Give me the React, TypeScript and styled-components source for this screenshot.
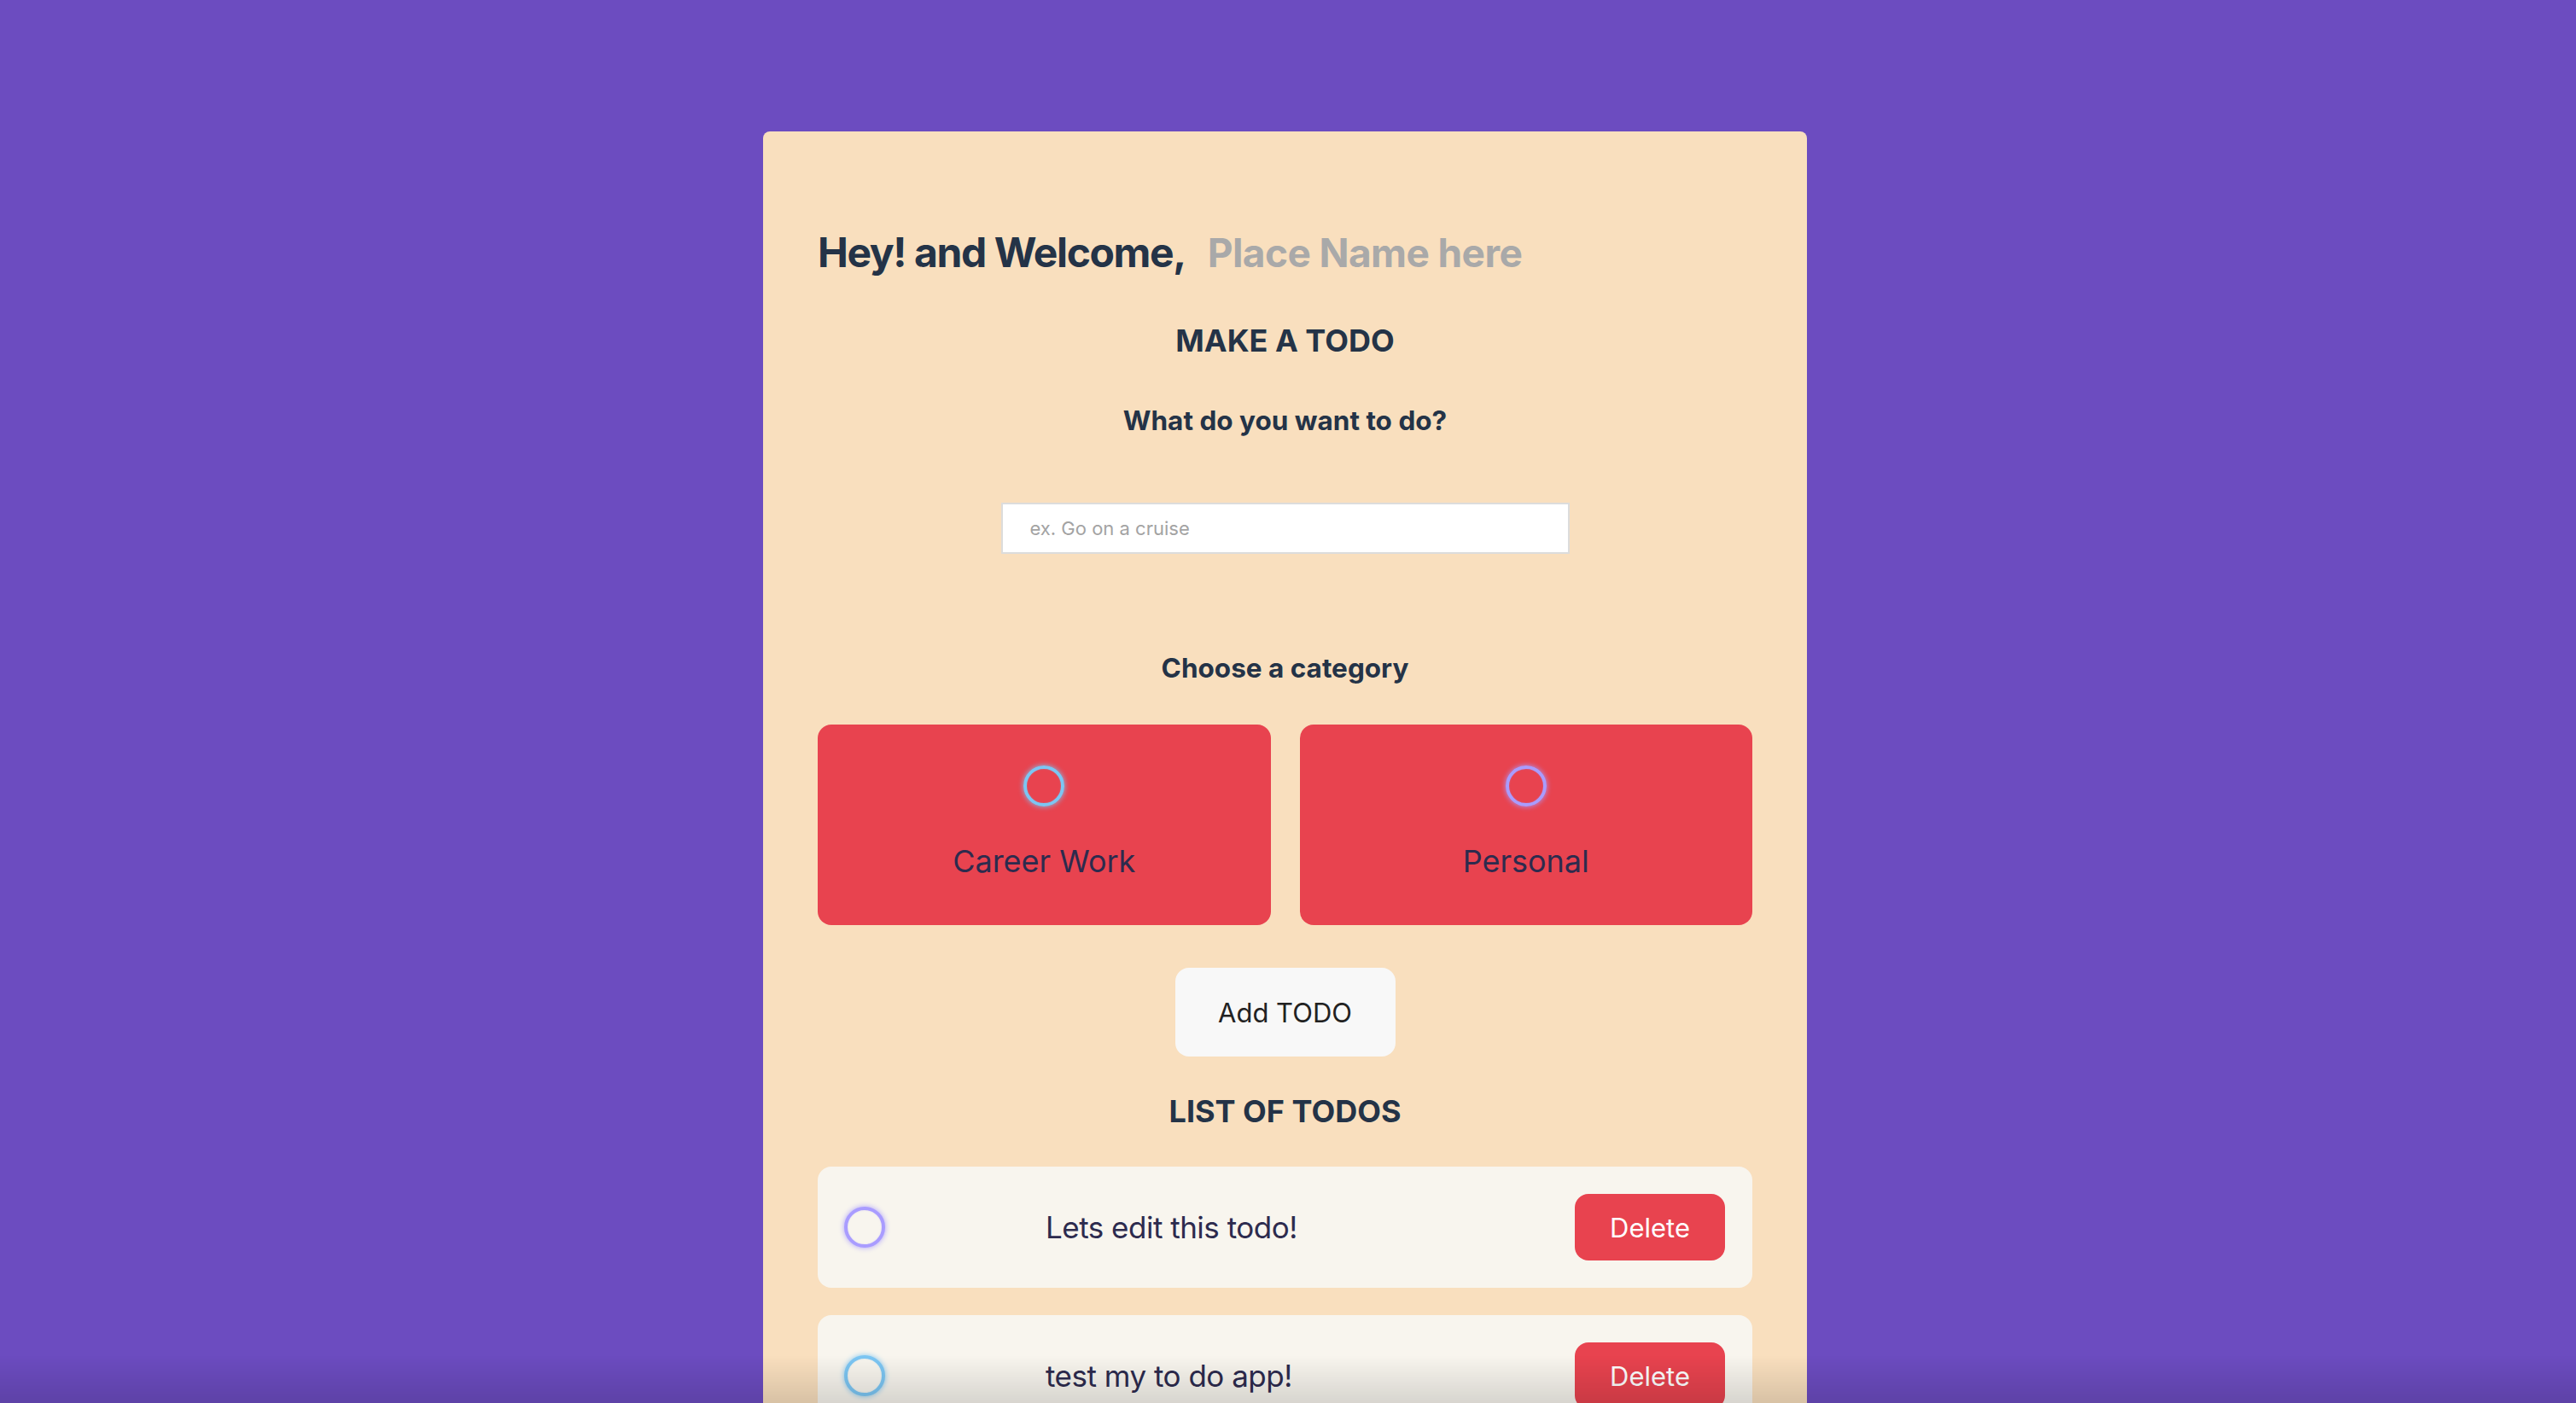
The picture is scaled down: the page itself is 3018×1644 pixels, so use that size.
import React from "react";
import styled, { createGlobalStyle } from "styled-components";

const GlobalStyle = createGlobalStyle`
  * { box-sizing: border-box; }
  html, body {
    margin: 0;
    padding: 0;
    background: #6c4cc0;
    font-family: Inter, "Noto Sans", sans-serif;
  }
  body { min-height: 100vh; }
`;

const Page = styled.main`
  min-height: 100vh;
  padding: 154px 7px 0 0;
  display: flex;
  justify-content: center;
`;

const Card = styled.section`
  width: 1223px;
  background: #f9dfbe;
  border-radius: 8px;
  padding: 112px 64px 64px;
  display: flex;
  flex-direction: column;
  color: #243347;
`;

const Greeting = styled.div`
  display: flex;
  align-items: baseline;
  gap: 26px;
  font-size: 48px;
  font-weight: 700;
  line-height: normal;
`;

const GreetingText = styled.span`
  flex: none;
  white-space: nowrap;
  letter-spacing: -1.4px;
`;

const NameInput = styled.input`
  flex: 1;
  min-width: 0;
  border: none;
  background: transparent;
  outline: none;
  padding: 0;
  font-family: inherit;
  font-size: 46px;
  font-weight: 700;
  letter-spacing: -0.6px;
  color: #243347;
  &::placeholder { color: #a9a9a9; }
`;

const SectionTitle = styled.h3<{ $top: number }>`
  margin: ${(p) => p.$top}px 0 0;
  text-align: center;
  font-size: 36px;
  font-weight: 700;
  line-height: normal;
`;

const Prompt = styled.h4<{ $top: number }>`
  margin: ${(p) => p.$top}px 0 0;
  text-align: center;
  font-size: 31.5px;
  font-weight: 700;
  line-height: normal;
`;

const TodoInput = styled.input`
  align-self: center;
  margin-top: 77px;
  width: 666px;
  height: 60px;
  border: 2px solid #dcdcdc;
  background: #fff;
  padding: 0 32px;
  font-family: inherit;
  font-size: 22px;
  color: #333;
  outline: none;
  &::placeholder { color: #a3a3a3; }
`;

const Categories = styled.div`
  margin-top: 47px;
  display: grid;
  grid-template-columns: 1fr 1fr;
  gap: 34px;
`;

const CategoryBox = styled.label`
  height: 235px;
  background: #e8434f;
  border-radius: 16px;
  display: flex;
  flex-direction: column;
  align-items: center;
  padding-top: 48px;
  gap: 42px;
  cursor: pointer;
`;

const Bubble = styled.span<{ $color: string; $fill?: string }>`
  width: 48px;
  height: 48px;
  flex: none;
  border-radius: 50%;
  border: 4px solid ${(p) => p.$color};
  background: ${(p) => p.$fill ?? "transparent"};
  box-shadow: 0 0 6px ${(p) => p.$color}, inset 0 0 2px ${(p) => p.$color}55;
`;

const CategoryLabel = styled.span`
  font-size: 36px;
  font-weight: 400;
  line-height: normal;
  color: #2d2b4e;
`;

const AddButton = styled.button`
  align-self: center;
  margin-top: 50px;
  width: 258px;
  height: 104px;
  border: none;
  border-radius: 16px;
  background: #f8f8f8;
  font-family: inherit;
  font-size: 31px;
  color: #222;
  cursor: pointer;
`;

const TodoList = styled.ul`
  list-style: none;
  margin: 43px 0 0;
  padding: 0;
  display: flex;
  flex-direction: column;
  gap: 32px;
`;

const TodoItem = styled.li`
  height: 142px;
  background: #f8f5ee;
  border-radius: 16px;
  display: flex;
  align-items: center;
  padding: 0 32px 0 31px;
`;

const TodoText = styled.span`
  flex: 1;
  margin-left: 188px;
  font-size: 35px;
  letter-spacing: -0.5px;
  font-weight: 400;
  line-height: normal;
  color: #2d2b4e;
`;

const DeleteButton = styled.button`
  width: 176px;
  height: 78px;
  border: none;
  border-radius: 16px;
  background: #e8434f;
  color: #fff;
  font-family: inherit;
  font-size: 31px;
  cursor: pointer;
`;

const BottomFade = styled.div`
  position: fixed;
  left: 0;
  right: 0;
  bottom: 0;
  height: 56px;
  pointer-events: none;
  background: linear-gradient(to bottom, rgba(0, 0, 0, 0), rgba(0, 0, 0, 0.13));
`;

const todos = [
  { text: "Lets edit this todo!", color: "#a99cff" },
  { text: "test my to do app!", color: "#7cc6f3" },
];

export default function App() {
  return (
    <>
      <GlobalStyle />
      <Page>
        <Card>
          <Greeting>
            <GreetingText>Hey! and Welcome,</GreetingText>
            <NameInput placeholder="Place Name here" />
          </Greeting>
          <SectionTitle $top={52}>MAKE A TODO</SectionTitle>
          <Prompt $top={52}>What do you want to do?</Prompt>
          <TodoInput placeholder="ex. Go on a cruise" />
          <Prompt $top={114}>Choose a category</Prompt>
          <Categories>
            <CategoryBox>
              <Bubble $color="#7cc6f3" />
              <CategoryLabel>Career Work</CategoryLabel>
            </CategoryBox>
            <CategoryBox>
              <Bubble $color="#a99cff" />
              <CategoryLabel>Personal</CategoryLabel>
            </CategoryBox>
          </Categories>
          <AddButton>Add TODO</AddButton>
          <SectionTitle $top={42}>LIST OF TODOS</SectionTitle>
          <TodoList>
            {todos.map((t) => (
              <TodoItem key={t.text}>
                <Bubble $color={t.color} $fill="#f8f5ee" />
                <TodoText>{t.text}</TodoText>
                <DeleteButton>Delete</DeleteButton>
              </TodoItem>
            ))}
          </TodoList>
        </Card>
      </Page>
      <BottomFade />
    </>
  );
}
